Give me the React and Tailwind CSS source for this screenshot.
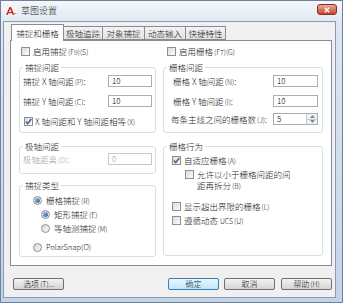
import React from "react";

const font = "font-['Noto_Sans_CJK_SC','Liberation_Sans',sans-serif]";

function Key({ children }) {
  return <span className="text-[7px] ml-[1px]">{children}</span>;
}

function Check({ checked }) {
  return (
    <span className="w-[9px] h-[9px] shrink-0 border border-[#8e8f8f] bg-gradient-to-br from-[#dcdcdc] to-[#fbfbfb] flex items-center justify-center">
      {checked ? (
        <svg width="7" height="7" viewBox="0 0 7 7">
          <path d="M0.8 3.6 L2.7 5.6 L6.3 1.0" fill="none" stroke="#3d5a8f" strokeWidth="1.4" />
        </svg>
      ) : null}
    </span>
  );
}

function Radio({ checked }) {
  return (
    <span className="w-[9px] h-[9px] shrink-0 rounded-full border border-[#8e8f8f] bg-gradient-to-br from-[#d6d6d6] to-[#fafafa] flex items-center justify-center">
      {checked ? <span className="w-[5px] h-[5px] rounded-full bg-gradient-to-br from-[#8fc3f0] to-[#1f5fa6]" /> : null}
    </span>
  );
}

function Field({ value, disabled, spin }) {
  return (
    <div
      className={`h-[12px] flex items-center border bg-white pl-[3px] ${
        disabled ? "border-[#c5c9cf] text-[#a0a0a0]" : "border-[#abadb3] text-black"
      }`}
    >
      <span className="flex-1 text-[8px]">{value}</span>
      {spin ? (
        <div className="w-[11px] h-[10px] flex flex-col border-l border-[#c8cbd0]">
          <div className="flex-1 flex items-center justify-center bg-[#eef1f5] border-b border-[#c8cbd0]">
            <svg width="5" height="3" viewBox="0 0 5 3"><path d="M0 3 L2.5 0 L5 3 Z" fill="#7a8796" /></svg>
          </div>
          <div className="flex-1 flex items-center justify-center bg-[#eef1f5]">
            <svg width="5" height="3" viewBox="0 0 5 3"><path d="M0 0 L2.5 3 L5 0 Z" fill="#7a8796" /></svg>
          </div>
        </div>
      ) : null}
    </div>
  );
}

function Group({ title, className, children }) {
  return (
    <fieldset className={`border border-[#d5dfe5] rounded-[3px] ${className}`}>
      <legend className="ml-[3px] px-[2px] h-[10px] leading-[10px]">{title}</legend>
      {children}
    </fieldset>
  );
}

function Button({ children, primary, className = "" }) {
  return (
    <button
      className={`h-[12px] w-[51px] rounded-[2px] border text-[8px] leading-[10px] flex items-center justify-center ${
        primary
          ? "border-[#3c7fb1] bg-gradient-to-b from-[#eaf6fd] to-[#bee6fd]"
          : "border-[#707070] bg-gradient-to-b from-[#f2f2f2] to-[#d5d5d5]"
      } ${className}`}
    >
      {children}
    </button>
  );
}

function AcadIcon() {
  return (
    <svg width="12" height="10" viewBox="0 0 12 10">
      <rect x="0" y="0" width="12" height="10" fill="#f4f4f4" />
      <polygon points="1,9 4.5,1 6,1 9.5,9 7.8,9 5.2,3 2.7,9" fill="#d2231f" />
      <rect x="3.5" y="6" width="4" height="1.2" fill="#d2231f" />
      <rect x="8" y="7" width="3.5" height="1" fill="#e58a3a" />
    </svg>
  );
}

const tabs = ["极轴追踪", "对象捕捉", "动态输入", "快捷特性"];
const tabWidths = ["w-[40px]", "w-[43px]", "w-[42px]", "w-[41px]"];

export default function App() {
  return (
    <div className={`w-[343px] h-[303px] overflow-hidden border border-[#6d819b] bg-gradient-to-b from-[#dfe8f3] to-[#c4d4e8] flex flex-col text-[8.5px] leading-[10px] text-[#1a1a1a] font-light ${font}`}>
      <div className="h-[20px] shrink-0 flex items-center pl-[4px] pr-[5px] bg-gradient-to-b from-[#f4f7fb] to-[#e1e9f3]">
        <AcadIcon />
        <span className="ml-[4px] text-[9px] text-[#1e1e1e]">草图设置</span>
        <div className="ml-auto mb-[3px] w-[20px] h-[11px] rounded-[3px] border border-[#8b2e1e] bg-gradient-to-b from-[#e9a896] to-[#c4432d] flex items-center justify-center">
          <svg width="6" height="6" viewBox="0 0 6 6">
            <path d="M0.8 0.8 L5.2 5.2 M5.2 0.8 L0.8 5.2" stroke="#ffffff" strokeWidth="1.4" />
          </svg>
        </div>
      </div>

      <div className="flex-1 ml-[2px] mr-[6px] mb-[4px] border border-[#8a9bb0] bg-[#f0f0f0] flex flex-col">
        <div className="h-[18px] pt-[2px] pl-[7px] flex items-end">
          <div className="w-[53px] h-[17px] -mb-px relative z-10 bg-white border border-b-0 border-[#898c95] flex items-center justify-center">
            捕捉和栅格
          </div>
          {tabs.map((t, i) => (
            <div
              key={t}
              className={`${tabWidths[i]} h-[14px] -ml-px border border-[#898c95] bg-gradient-to-b from-[#f3f3f3] to-[#e2e2e2] flex items-center justify-center`}
            >
              {t}
            </div>
          ))}
        </div>

        <div className="ml-[6px] mr-[3px] h-[226px] border border-[#898c95] bg-white flex pl-[8px] pt-[5px] gap-[7px]">
          <div className="w-[137px] flex flex-col">
            <div className="h-[10px] flex items-center gap-[3px] pl-[2px]">
              <Check />
              <span>启用捕捉<Key>(F9)(S)</Key></span>
            </div>
            <Group title="捕捉间距" className="mt-[6px] h-[71px]">
              <div className="mt-[3px] flex items-center pl-[3px]">
                <span className="w-[85px]">捕捉 X 轴间距<Key>(P)</Key>:</span>
                <div className="w-[44px]"><Field value="10" /></div>
              </div>
              <div className="mt-[8px] flex items-center pl-[3px]">
                <span className="w-[85px]">捕捉 Y 轴间距<Key>(C)</Key>:</span>
                <div className="w-[44px]"><Field value="10" /></div>
              </div>
              <div className="mt-[9px] h-[10px] flex items-center gap-[2px] pl-[4px]">
                <Check checked />
                <span>X 轴间距和 Y 轴间距相等<Key>(X)</Key></span>
              </div>
            </Group>
            <Group title="极轴间距" className="mt-[8px] h-[33px]">
              <div className="mt-[2px] flex items-center pl-[3px]">
                <span className="w-[85px] text-[#a0a0a0]">极轴距离<Key>(D)</Key>:</span>
                <div className="w-[44px]"><Field value="0" disabled /></div>
              </div>
            </Group>
            <Group title="捕捉类型" className="mt-[6px] h-[77px]">
              <div className="mt-[5px] h-[10px] flex items-center gap-[4px] pl-[13px]">
                <Radio checked />
                <span>栅格捕捉<Key>(R)</Key></span>
              </div>
              <div className="mt-[4px] h-[10px] flex items-center gap-[4px] pl-[21px]">
                <Radio checked />
                <span>矩形捕捉<Key>(E)</Key></span>
              </div>
              <div className="mt-[4px] h-[10px] flex items-center gap-[4px] pl-[21px]">
                <Radio />
                <span>等轴测捕捉<Key>(M)</Key></span>
              </div>
              <div className="mt-[9px] h-[10px] flex items-center gap-[4px] pl-[13px]">
                <Radio />
                <span className="text-[7.5px]">PolarSnap(O)</span>
              </div>
            </Group>
          </div>

          <div className="w-[160px] flex flex-col">
            <div className="h-[10px] flex items-center gap-[3px] pl-[4px]">
              <Check />
              <span>启用栅格<Key>(F7)(G)</Key></span>
            </div>
            <Group title="栅格间距" className="mt-[6px] h-[71px]">
              <div className="mt-[3px] flex items-center pl-[9px]">
                <span className="w-[100px]">栅格 X 轴间距<Key>(N)</Key>:</span>
                <div className="w-[45px]"><Field value="10" /></div>
              </div>
              <div className="mt-[8px] flex items-center pl-[9px]">
                <span className="w-[100px]">栅格 Y 轴间距<Key>(I)</Key>:</span>
                <div className="w-[45px]"><Field value="10" /></div>
              </div>
              <div className="mt-[6px] flex items-center pl-[7px]">
                <span className="w-[102px]">每条主线之间的栅格数<Key>(J)</Key>:</span>
                <div className="w-[45px]"><Field value="5" spin /></div>
              </div>
            </Group>
            <Group title="栅格行为" className="mt-[8px] h-[115px]">
              <div className="mt-[4px] h-[10px] flex items-center gap-[3px] pl-[8px]">
                <Check checked />
                <span>自适应栅格<Key>(A)</Key></span>
              </div>
              <div className="mt-[4px] flex items-start gap-[3px] pl-[21px]">
                <div className="h-[11px] flex items-center"><Check /></div>
                <div className="flex flex-col leading-[11px]">
                  <span>允许以小于栅格间距的间</span>
                  <span>距再拆分<Key>(B)</Key></span>
                </div>
              </div>
              <div className="mt-[9px] h-[10px] flex items-center gap-[3px] pl-[8px]">
                <Check />
                <span>显示超出界限的栅格<Key>(L)</Key></span>
              </div>
              <div className="mt-[4px] h-[10px] flex items-center gap-[3px] pl-[8px]">
                <Check />
                <span>遵循动态 <span className="text-[7px]">UCS</span><Key>(U)</Key></span>
              </div>
            </Group>
          </div>
        </div>

        <div className="mt-[12px] flex items-center pl-[9px] pr-[3px]">
          <Button>选项<Key>(T)...</Key></Button>
          <Button primary className="ml-auto">确定</Button>
          <Button className="ml-[5px]">取消</Button>
          <Button className="ml-[6px]">帮助<Key>(H)</Key></Button>
        </div>
      </div>
    </div>
  );
}
